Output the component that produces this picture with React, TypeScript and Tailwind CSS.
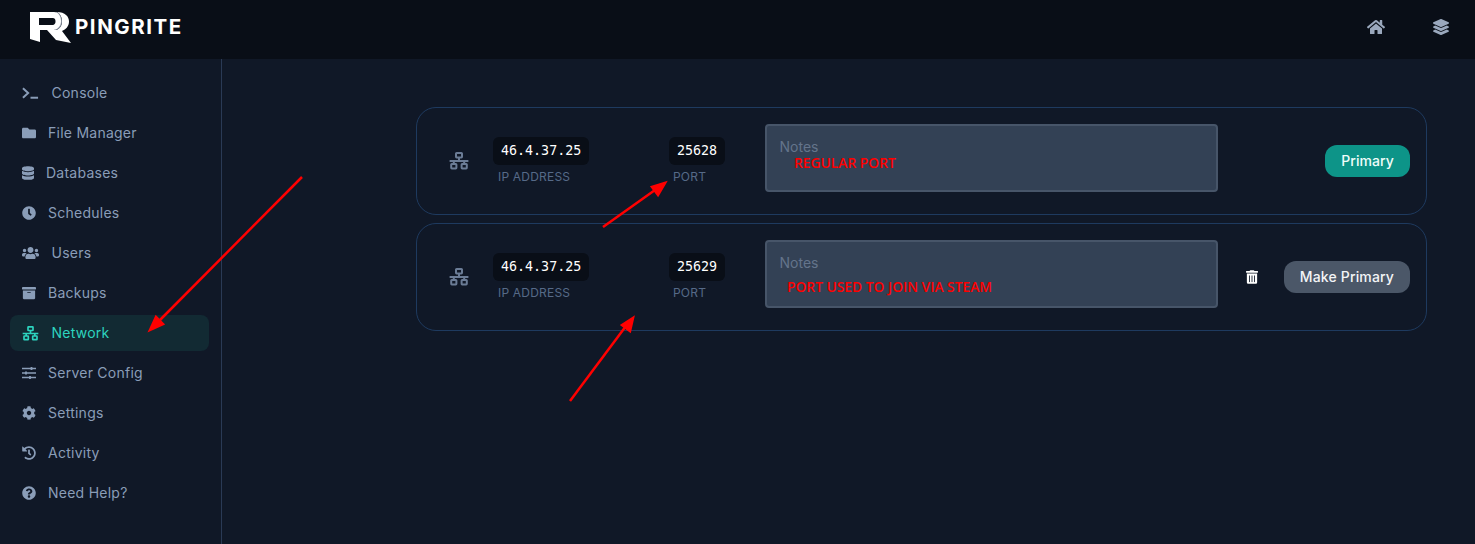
import {
  FaArchive,
  FaClock,
  FaCog,
  FaDatabase,
  FaFolder,
  FaHistory,
  FaHome,
  FaLayerGroup,
  FaQuestionCircle,
  FaTrashAlt,
  FaUsers,
} from "react-icons/fa";

function NetworkIcon({ className }: { className: string }) {
  return (
    <svg viewBox="0 0 20 18" className={className} fill="none" stroke="currentColor" strokeWidth="2">
      <rect x="7" y="1" width="6" height="4.4" rx="0.6" />
      <rect x="2.2" y="12" width="5.2" height="4.4" rx="0.6" />
      <rect x="12.6" y="12" width="5.2" height="4.4" rx="0.6" />
      <path d="M10 5.5v3.4M0.6 9h18.8M4.8 9v3M15.2 9v3" />
    </svg>
  );
}

function TerminalIcon({ className }: { className: string }) {
  return (
    <svg viewBox="0 0 18 12" className={className} fill="none" stroke="currentColor" strokeWidth="2.1">
      <path d="M1 1l5.500 5L1 11" />
      <path d="M9 11h8" />
    </svg>
  );
}

function SlidersIcon({ className }: { className: string }) {
  return (
    <svg viewBox="0 0 14 12" className={className} fill="none" stroke="currentColor">
      <path d="M0 1.500h14M0 6h14M0 10.500h14" strokeWidth="1.500" />
      <path d="M9.500 0v3M4 4.500v3M8 9v3" strokeWidth="1.800" />
    </svg>
  );
}

function Logo() {
  return (
    <svg viewBox="0 0 41 33" className="w-[41px] h-[33px]">
      {/* back R */}
      <path
        d="M27 1C35 1 39 5.500 39 10.500C39 15 36 18.500 32 20L41 32L26 29L17 19H26C30 18 32 14 32 10.500C32 6 30 2.500 27 1Z"
        fill="#fff"
      />
      <path d="M27 1C30 2.500 32 6 32 10.500C32 14 30 18 26 19L24 19C28 17 30 14 30 10.500C30 6 29 3 25 1Z" fill="#8b93a1" />
      {/* front P */}
      <path
        fillRule="evenodd"
        d="M0 1H24C29 1 31 6 31 10C31 15 28 18 24 19H10V31L0 28ZM9 7V14H22C25 14 25.500 12 25.500 10.500C25.500 8.500 25 7 22 7Z"
        fill="#fff"
      />
    </svg>
  );
}

const items = [
  { label: "Console", icon: <TerminalIcon className="w-[17px] h-[12px]" />, gap: "ml-[12.5px]" },
  { label: "File Manager", icon: <FaFolder className="w-[14px] h-[14px]" />, gap: "ml-[12px]" },
  { label: "Databases", icon: <FaDatabase className="w-[12px] h-[14px]" />, gap: "ml-[12px]" },
  { label: "Schedules", icon: <FaClock className="w-[14px] h-[14px]" />, gap: "ml-[12px]" },
  { label: "Users", icon: <FaUsers className="w-[17px] h-[14px]" />, gap: "ml-[12.5px]" },
  { label: "Backups", icon: <FaArchive className="w-[14px] h-[14px]" />, gap: "ml-[12px]" },
  { label: "Network", icon: <NetworkIcon className="w-[17px] h-[15px]" />, gap: "ml-[12.5px]", active: true },
  { label: "Server Config", icon: <SlidersIcon className="w-[14px] h-[12px]" />, gap: "ml-[12px]" },
  { label: "Settings", icon: <FaCog className="w-[14px] h-[14px]" />, gap: "ml-[12px]" },
  { label: "Activity", icon: <FaHistory className="w-[14px] h-[14px]" />, gap: "ml-[12px]" },
  { label: "Need Help?", icon: <FaQuestionCircle className="w-[14px] h-[14px]" />, gap: "ml-[12px]" },
];

function AllocationRow({
  port,
  note,
  noteClass,
  primary,
}: {
  port: string;
  note: string;
  noteClass: string;
  primary?: boolean;
}) {
  return (
    <div className="h-[108px] rounded-[20px] border border-[#1e3a5f] pl-8 pr-4 flex items-center">
      <NetworkIcon className="w-[20px] h-[18px] text-[#6b7c96] shrink-0" />
      <div className="ml-6 w-[176px] shrink-0 pt-[1px]">
        <code className="block w-fit bg-[#090e17] rounded-md px-2 h-7 leading-7 text-[13.33px] font-medium text-white font-['DejaVu_Sans_Mono',monospace]">
          46.4.37.25
        </code>
        <p className="mt-[2px] ml-[5px] text-xs leading-5 tracking-[0.2px] text-[#566a87]">IP ADDRESS</p>
      </div>
      <div className="w-[96px] shrink-0 pt-[1px]">
        <code className="block w-fit bg-[#090e17] rounded-md px-2 h-7 leading-7 text-[13.33px] font-medium text-white font-['DejaVu_Sans_Mono',monospace]">
          {port}
        </code>
        <p className="mt-[2px] ml-[4px] text-xs leading-5 tracking-[0.2px] text-[#566a87]">PORT</p>
      </div>
      <div className="relative w-[453px] h-[68px] shrink-0 self-start mt-4 rounded bg-[#334155] border-2 border-[#475569] px-[12.5px] pt-[13px] text-sm leading-4 text-[#64748b]">
        Notes
        <span className={`absolute text-[13.8px] leading-4 font-semibold text-[#ff0000] font-['Open_Sans',sans-serif] ${noteClass}`}>
          {note}
        </span>
      </div>
      <div className="flex-1 flex items-center justify-end">
        {primary ? (
          <span className="h-8 px-4 rounded-xl bg-[#0d9488] text-sm font-medium tracking-[0.1px] leading-8 text-[#f0fdfa]">
            Primary
          </span>
        ) : (
          <>
            <FaTrashAlt className="w-[12px] h-[14px] mr-[26px] text-white" />
            <span className="h-8 px-4 rounded-xl bg-[#4b5768] text-sm font-medium tracking-[0.15px] leading-8 text-[#f3f4f6]">
              Make Primary
            </span>
          </>
        )}
      </div>
    </div>
  );
}

export default function App() {
  return (
    <div className="relative h-[544px] overflow-hidden bg-[#101827] font-['Inter',sans-serif] flex flex-col">
      {/* Header */}
      <header className="h-[59px] shrink-0 bg-[#090e17] flex items-start justify-between pl-[30px]">
        <div className="flex items-center mt-[11px]">
          <Logo />
          <span className="ml-[4px] -mt-[2px] text-[20.5px] leading-[30px] font-bold tracking-[1.55px] text-white">
            PINGRITE
          </span>
        </div>
        <div className="flex items-center text-[#9aa8bd] mr-[26px] mt-[19px]">
          <FaHome className="w-[18px] h-[16px] mr-[48px]" />
          <FaLayerGroup className="w-[16px] h-[16px]" />
        </div>
      </header>

      <div className="flex flex-1">
        {/* Sidebar */}
        <aside className="w-[222px] shrink-0 border-r border-[#2a3a55] pt-[14px] px-[10px]">
          {items.map((item) => (
            <div key={item.label} className="h-10 flex items-center">
              <div
                className={`h-9 w-[199px] rounded-lg pl-3 flex items-center text-[14px] tracking-[0.25px] ${
                  item.active ? "bg-[#122a33] text-[#2dd4bf]" : "text-[#8a9db8]"
                }`}
              >
                {item.icon}
                <span className={`${item.gap} -mt-[1px]`}>{item.label}</span>
              </div>
            </div>
          ))}
        </aside>

        {/* Allocations */}
        <main className="flex-1 pt-12 pl-[194px] pr-12 flex flex-col gap-2">
          <AllocationRow port="25628" note="REGULAR PORT" noteClass="left-[27px] top-[29px]" primary />
          <AllocationRow port="25629" note="PORT USED TO JOIN VIA STEAM" noteClass="left-[20px] top-[37px]" />
        </main>
      </div>

      {/* Red annotation arrows */}
      <svg className="absolute inset-0 w-full h-full pointer-events-none" viewBox="0 0 1475 544">
        <g stroke="#ff0000" strokeWidth="2.500" fill="#ff0000">
          <path d="M302 177L158 322" />
          <path d="M150 330l6-13 7 7z" />
          <path d="M603 227l52-37" />
          <path d="M665 183l-7 12-6-8z" />
          <path d="M570 401l56-75" />
          <path d="M633 318l-3 13-8-6z" />
        </g>
      </svg>
    </div>
  );
}
